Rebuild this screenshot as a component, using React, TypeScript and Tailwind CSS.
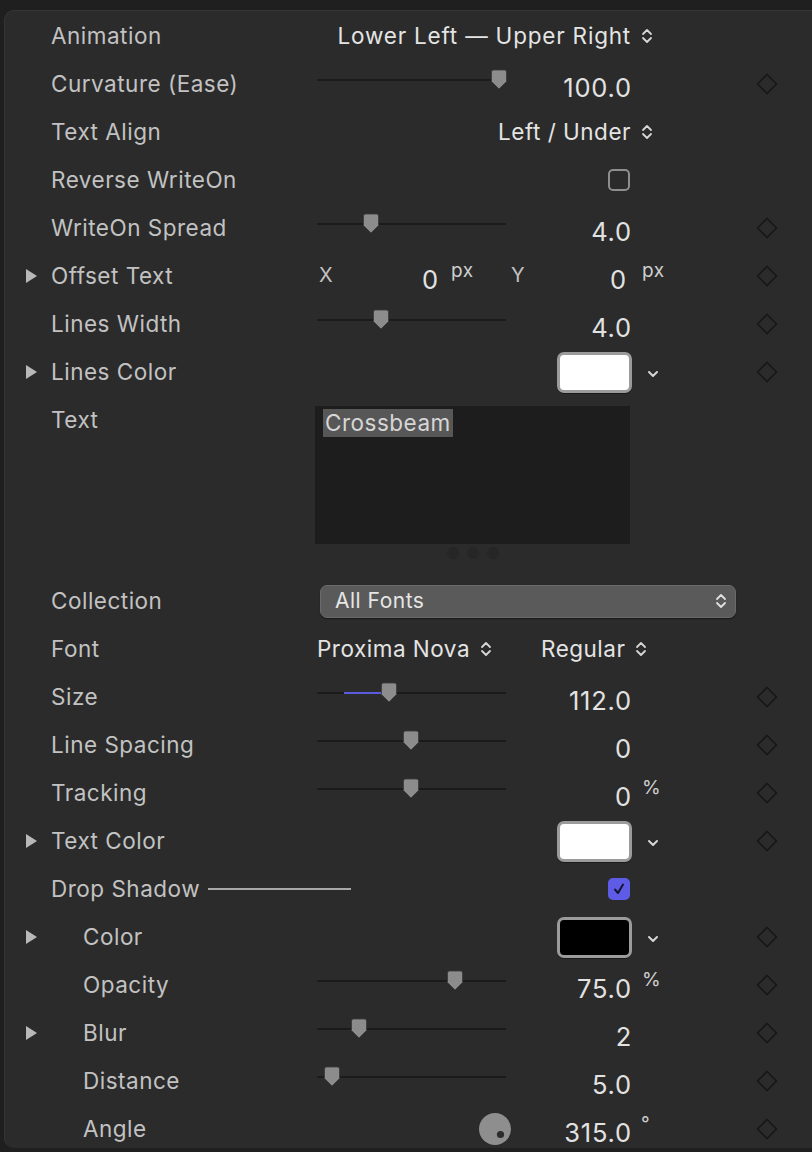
import type { ReactNode } from "react";

const font = { fontFamily: "Inter, 'Noto Sans', sans-serif" };

function Tri() {
  return (
    <svg width="13" height="16" viewBox="0 0 13 16">
      <path d="M1 1 L12 8 L1 15 Z" fill="#b9b9b9" />
    </svg>
  );
}

function Diamond() {
  return (
    <svg width="22" height="22" viewBox="0 0 22 22">
      <path d="M11 1.5 L20.5 11 L11 20.5 L1.5 11 Z" fill="none" stroke="#181818" strokeWidth="1.6" />
    </svg>
  );
}

function UpDown({ color = "#d6d6d6" }: { color?: string }) {
  return (
    <svg width="12" height="18" viewBox="0 0 12 18">
      <path d="M2 7 L6 3 L10 7 M2 11 L6 15 L10 11" fill="none" stroke={color} strokeWidth="1.8" strokeLinecap="round" strokeLinejoin="round" />
    </svg>
  );
}

function ChevDown() {
  return (
    <svg width="14" height="10" viewBox="0 0 14 10">
      <path d="M3 3 L7 7 L11 3" fill="none" stroke="#d6d6d6" strokeWidth="2" strokeLinecap="round" strokeLinejoin="round" />
    </svg>
  );
}

function Slider({ pos, fill }: { pos: number; fill?: number }) {
  // pos: thumb centre, measured from the track start
  return (
    <div className="relative w-[189px] h-[22px] -translate-y-[4px] shrink-0">
      <div className="absolute left-0 right-0 top-[10px] h-[2px] bg-[#1b1b1b]" />
      {fill !== undefined && (
        <div className="absolute top-[10px] h-[2px] bg-[#5b5be0]" style={{ left: fill, width: pos - fill }} />
      )}
      <svg className="absolute top-[0px]" style={{ left: pos - 9 }} width="18" height="21" viewBox="0 0 18 21">
        <path d="M1.5 3 Q1.5 1 3.5 1 H14.5 Q16.5 1 16.5 3 V12.5 L9 20 L1.5 12.5 Z" fill="#8c8c8c" stroke="#3a3a3a" strokeWidth="0.8" />
      </svg>
    </div>
  );
}

function Value({ v, w = 126 }: { v: string; w?: number }) {
  return (
    <div className="text-right text-[#e2e2e2] text-[25.5px] tracking-[0.8px] translate-y-[4px] shrink-0" style={{ width: w }}>
      {v}
    </div>
  );
}

function Unit({ u, className = "" }: { u: string; className?: string }) {
  return <span className={"text-[19px] text-[#cfcfcf] -translate-y-[5px] shrink-0 " + className}>{u}</span>;
}

function Row({
  label,
  tri,
  indent,
  diamond,
  children,
  tall,
}: {
  label: ReactNode;
  tri?: boolean;
  indent?: boolean;
  diamond?: boolean;
  children?: ReactNode;
  tall?: boolean;
}) {
  return (
    <div className={"flex pl-[20px] pr-[34px] " + (tall ? "h-[181px] items-start" : "h-[48px] items-center")}>
      <div className="w-[26px] h-[48px] flex items-center shrink-0">{tri && <Tri />}</div>
      <div className={"w-[266px] h-[48px] shrink-0 flex items-center text-[#c2c2c2] whitespace-nowrap " + (indent ? "pl-[32px]" : "")}>
        {label}
      </div>
      <div className={"w-[340px] shrink-0 flex " + (tall ? "items-start" : "items-center")}>{children}</div>
      <div className="flex-1" />
      <div className="w-[22px] h-[48px] flex items-center shrink-0">{diamond && <Diamond />}</div>
    </div>
  );
}

function Popup({ text }: { text: string }) {
  return (
    <div className="flex items-center gap-[10px] text-[#e4e4e4] whitespace-nowrap">
      <span>{text}</span>
      <UpDown />
    </div>
  );
}

function ColorWell({ color }: { color: string }) {
  return (
    <div className="flex items-center">
      <div className="w-[75px] h-[41px] rounded-[7px] bg-[#9b9b9b] p-[3px] shadow-[0_1px_0_#1a1a1a]">
        <div className="w-full h-full rounded-[4px]" style={{ background: color }} />
      </div>
      <div className="ml-[14px] mt-[4px]">
        <ChevDown />
      </div>
    </div>
  );
}

export default function App() {
  return (
    <div className="min-h-[1152px] w-[812px] bg-[#1f1f1f] pt-[10px] pl-[4px] text-[22.5px] tracking-[0.5px]" style={font}>
      <div className="bg-[#2b2b2b] rounded-l-[10px] border-l border-t border-[#353535] pt-[1px] h-[1138px] overflow-hidden">
        <Row label="Animation">
          <div className="flex-1 flex justify-end pr-[4px] tracking-[0.8px]">
            <Popup text="Lower Left — Upper Right" />
          </div>
        </Row>
        <Row label="Curvature (Ease)" diamond>
          <Slider pos={182} />
          <Value v="100.0" />
        </Row>
        <Row label="Text Align">
          <div className="flex-1 flex justify-end pr-[4px]">
            <Popup text="Left / Under" />
          </div>
        </Row>
        <Row label="Reverse WriteOn">
          <div className="flex-1 flex justify-end pr-[27px]">
            <div className="w-[22px] h-[22px] rounded-[5px] border-2 border-[#8e8e8e]" />
          </div>
        </Row>
        <Row label="WriteOn Spread" diamond>
          <Slider pos={54} />
          <Value v="4.0" />
        </Row>
        <Row label="Offset Text" tri diamond>
          <div className="w-[17px] pl-[2px] text-[#c2c2c2] text-[20px] -translate-y-[1px] shrink-0">X</div>
          <Value v="0" w={105} />
          <Unit u="px" className="ml-[12px] w-[60px]" />
          <div className="w-[16px] text-[#c2c2c2] text-[20px] -translate-y-[1px] shrink-0">Y</div>
          <Value v="0" w={100} />
          <Unit u="px" className="ml-[15px]" />
        </Row>
        <Row label="Lines Width" diamond>
          <Slider pos={64} />
          <Value v="4.0" />
        </Row>
        <Row label="Lines Color" tri diamond>
          <div className="ml-[240px]">
            <ColorWell color="#ffffff" />
          </div>
        </Row>
        <Row label="Text" tall>
          <div className="flex flex-col items-center ml-[-2px] mt-[10px]">
            <div className="w-[315px] h-[138px] bg-[#1d1d1d] pl-[8px]">
              <span className="bg-[#575757] text-[#d6d6d6] px-[2px] inline-block leading-[28px]">Crossbeam</span>
            </div>
            <div className="flex gap-[8px] mt-[3px]">
              <div className="w-[12px] h-[12px] rounded-full bg-[#262626]" />
              <div className="w-[12px] h-[12px] rounded-full bg-[#262626]" />
              <div className="w-[12px] h-[12px] rounded-full bg-[#262626]" />
            </div>
          </div>
        </Row>
        <Row label="Collection">
          <div className="ml-[3px] w-[416px] shrink-0 h-[33px] rounded-[7px] bg-[#5a5a5a] border border-[#6a6a6a] shadow-[0_1px_1px_#1a1a1a] flex items-center justify-between pl-[14px] pr-[8px] text-[#e6e6e6] text-[21px]">
            <span>All Fonts</span>
            <UpDown color="#e0e0e0" />
          </div>
        </Row>
        <Row label="Font">
          <div className="w-[224px] shrink-0">
            <Popup text="Proxima Nova" />
          </div>
          <Popup text="Regular" />
        </Row>
        <Row label="Size" diamond>
          <Slider pos={72} fill={27} />
          <Value v="112.0" />
        </Row>
        <Row label="Line Spacing" diamond>
          <Slider pos={94} />
          <Value v="0" />
        </Row>
        <Row label="Tracking" diamond>
          <Slider pos={94} />
          <Value v="0" />
          <Unit u="%" className="ml-[10px]" />
        </Row>
        <Row label="Text Color" tri diamond>
          <div className="ml-[240px]">
            <ColorWell color="#ffffff" />
          </div>
        </Row>
        <Row
          label={
            <>
              <span>Drop Shadow</span>
              <span className="ml-[8px] w-[143px] h-[2px] bg-[#a8a8a8] shrink-0" />
            </>
          }
        >
          <div className="flex-1 flex justify-end pr-[27px]">
            <div className="w-[22px] h-[22px] rounded-[5px] bg-[#5e5ce6] flex items-center justify-center">
              <svg width="14" height="14" viewBox="0 0 14 14">
                <path d="M3 7.5 L6 11 L11 2.5" fill="none" stroke="#151530" strokeWidth="2" strokeLinecap="round" strokeLinejoin="round" />
              </svg>
            </div>
          </div>
        </Row>
        <Row label="Color" tri indent diamond>
          <div className="ml-[240px]">
            <ColorWell color="#000000" />
          </div>
        </Row>
        <Row label="Opacity" indent diamond>
          <Slider pos={138} />
          <Value v="75.0" />
          <Unit u="%" className="ml-[10px]" />
        </Row>
        <Row label="Blur" tri indent diamond>
          <Slider pos={42} />
          <Value v="2" />
        </Row>
        <Row label="Distance" indent diamond>
          <Slider pos={15} />
          <Value v="5.0" />
        </Row>
        <Row label="Angle" indent diamond>
          <div className="ml-[162px] w-[32px] h-[32px] shrink-0">
            <svg width="32" height="32" viewBox="0 0 32 32">
              <circle cx="16" cy="16" r="16" fill="#8e8e8e" />
              <circle cx="21.5" cy="21.5" r="3.6" fill="#2b2b2b" />
            </svg>
          </div>
          <Value v="315.0" w={121} />
          <Unit u="°" className="ml-[9px]" />
        </Row>
      </div>
    </div>
  );
}
